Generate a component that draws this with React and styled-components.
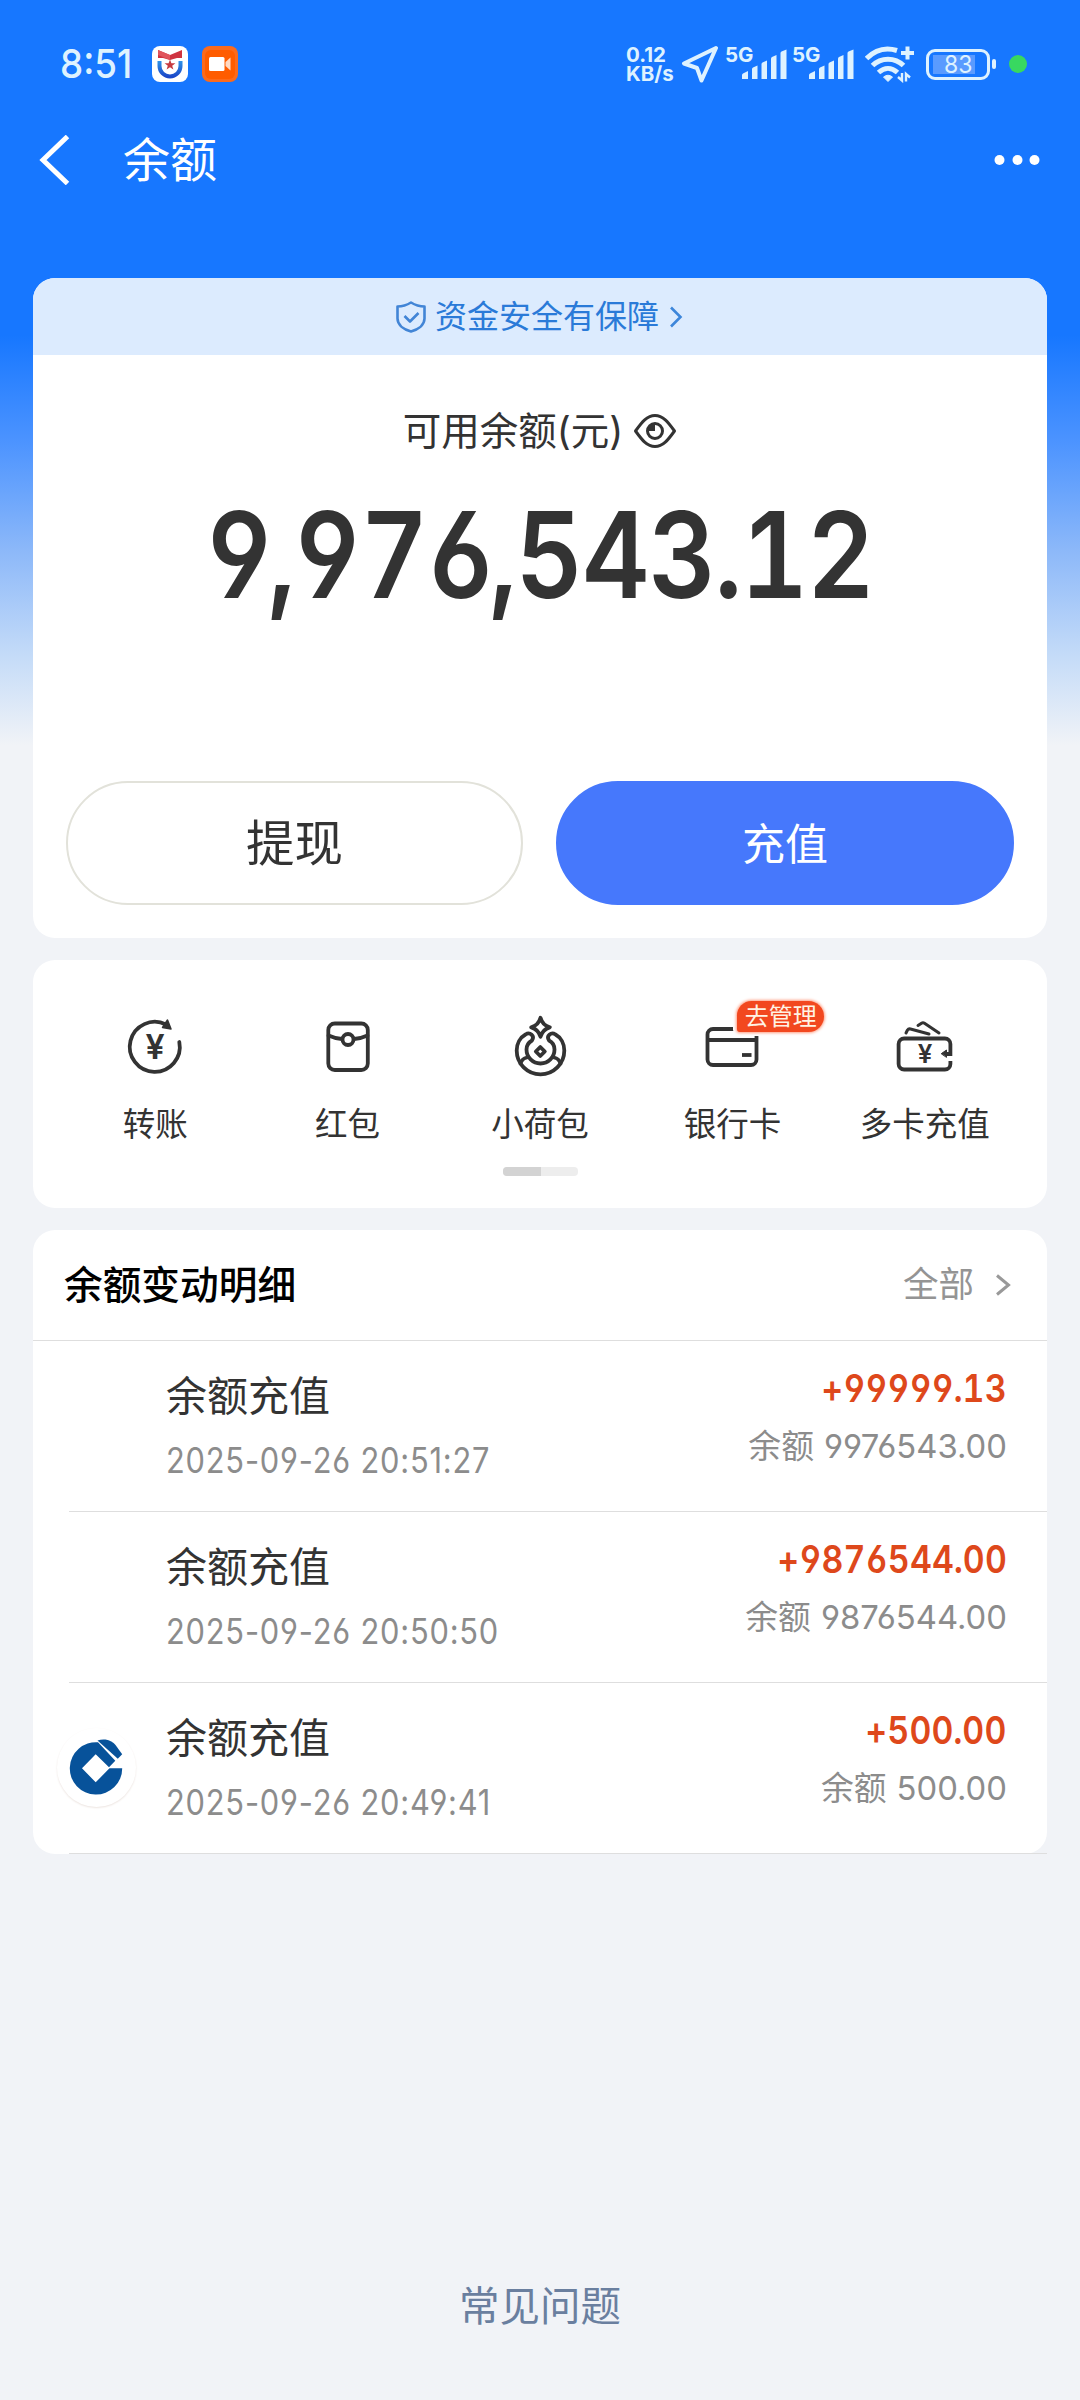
import React from "react";
import styled, { createGlobalStyle } from "styled-components";

const GlobalStyle = createGlobalStyle`
  body {
    margin: 0;
    background: #f1f3f7;
  }
  * {
    box-sizing: border-box;
  }
  svg {
    display: block;
    flex-shrink: 0;
  }
`;

const PageStyled = styled.div`
  width: 1080px;
  height: 2400px;
  overflow: hidden;
  display: flex;
  flex-direction: column;
  font-family: "Inter", "Noto Sans CJK SC", sans-serif;
  font-feature-settings: "cv03", "cv04";
  color: #333333;
  background: linear-gradient(
      180deg,
      #1777ff 0,
      #1777ff 335px,
      #4b93ff 440px,
      #8cb8f9 550px,
      #c4dbf8 655px,
      #f1f3f7 745px
    )
    #f1f3f7;
`;

/* digits are narrower than the base face */
const Digits = styled.span`
  display: inline-block;
  white-space: pre;
  letter-spacing: ${(p) => p.$spacing || 0}px;
  transform: scaleX(${(p) => p.$scale || 0.88});
  transform-origin: ${(p) => p.$origin || "left"} center;
`;
const TabularStyled = styled.span`
  font-feature-settings: "cv03", "cv04", "tnum";
`;
const PunctuationStyled = styled.span`
  margin-left: ${(p) => (p.$comma ? -0.067 : -0.034)}em;
  margin-right: -0.034em;
`;

/* ---------- status bar ---------- */

const StatusBarStyled = styled.div`
  height: 128px;
  padding: 0 53px 0 60px;
  display: flex;
  align-items: center;
  color: #def2ff;
`;
const ClockStyled = styled.div`
  width: 92px;
  font-size: 40px;
  line-height: 40px;
  font-weight: 500;
`;
const AppIconsStyled = styled.div`
  display: flex;
  gap: 14px;
  flex: 1;
`;
const SpeedStyled = styled.div`
  width: 55px;
  display: flex;
  flex-direction: column;
  font-size: 20.5px;
  line-height: 19px;
  font-weight: 700;
`;
const SignalStyled = styled.div`
  width: 61px;
  height: 34px;
  margin-left: ${(p) => p.$left}px;
  display: flex;
`;
const NetworkTypeStyled = styled.div`
  width: 17px;
  font-size: 20.5px;
  line-height: 16px;
  font-weight: 700;
  white-space: nowrap;
`;
const WifiStyled = styled.div`
  margin-left: 12px;
`;
const BatteryStyled = styled.div`
  width: 64px;
  height: 31px;
  margin-left: 11px;
  padding: 3px 4px;
  border: 3px solid #def2ff;
  border-radius: 9px;
`;
const BatteryLevelStyled = styled.div`
  width: 42px;
  height: 19px;
  padding-left: 11px;
  background: #5a9bff;
  font-size: 24px;
  line-height: 20px;
`;
const BatteryTipStyled = styled.div`
  width: 4px;
  height: 10px;
  margin-left: 2px;
  border-radius: 2px;
  background: #def2ff;
`;
const RecordDotStyled = styled.div`
  width: 18px;
  height: 18px;
  margin-left: 13px;
  border-radius: 50%;
  background: #38d860;
`;

/* ---------- nav bar ---------- */

const NavBarStyled = styled.div`
  height: 64px;
  padding: 0 40px 0 38px;
  display: flex;
  align-items: center;
`;
const NavTitleStyled = styled.div`
  flex: 1;
  margin-left: 53px;
  font-size: 47px;
  line-height: 64px;
  color: #ffffff;
`;

/* ---------- cards ---------- */

const MainStyled = styled.div`
  padding: 86px 33px 0;
  display: flex;
  flex-direction: column;
  gap: 22px;
`;
const CardStyled = styled.div`
  height: ${(p) => p.$height}px;
  border-radius: 22px;
  background: #ffffff;
  display: flex;
  flex-direction: column;
`;
const BannerStyled = styled.div`
  height: 77px;
  padding-right: 2px;
  border-radius: 22px 22px 0 0;
  background: #dcebfe;
  display: flex;
  justify-content: center;
  align-items: center;
  color: #2a7ad8;
  font-size: 32px;
  line-height: 40px;
`;
const BannerTextStyled = styled.span`
  margin: 0 10px 0 8px;
`;
const BalanceLabelStyled = styled.div`
  margin-top: 46px;
  height: 60px;
  display: flex;
  justify-content: center;
  align-items: center;
  gap: 10px;
  font-size: 38.5px;
  line-height: 60px;
`;
const BalanceStyled = styled.div`
  margin-top: 34px;
  height: 120px;
  display: flex;
  justify-content: center;
  font-size: 119px;
  line-height: 120px;
  font-weight: 600;
`;
const ButtonsStyled = styled.div`
  margin-top: auto;
  padding: 0 33px 33px;
  display: flex;
  gap: 33px;
`;
const ButtonStyled = styled.button`
  width: ${(p) => (p.$primary ? 458 : 457)}px;
  height: 124px;
  padding: 2px 0 0;
  border: 2px solid ${(p) => (p.$primary ? "#4678fc" : "#e2e2da")};
  border-radius: 62px;
  background: ${(p) => (p.$primary ? "#4678fc" : "#ffffff")};
  color: ${(p) => (p.$primary ? "#ffffff" : "#333333")};
  font-family: inherit;
  font-size: ${(p) => (p.$primary ? 43 : 48.5)}px;
  line-height: 60px;
`;

/* ---------- shortcuts ---------- */

const ShortcutsStyled = styled.div`
  padding: 55px 26px 0;
  display: grid;
  grid-template-columns: repeat(5, 1fr);
`;
const ShortcutStyled = styled.div`
  position: relative;
  display: flex;
  flex-direction: column;
  align-items: center;
  gap: 26px;
  font-size: 32.5px;
  line-height: 40px;
  white-space: nowrap;
`;
const BadgeStyled = styled.div`
  position: absolute;
  left: 101px;
  top: -14px;
  width: 87px;
  height: 31px;
  border-radius: 15px 16px 16px 3px;
  background: #f2481f;
  box-shadow: 0 0 3px 1px #ff9c80, 0 0 0 4px #ffffff;
  color: #fff3e4;
  font-size: 24px;
  line-height: 32px;
  text-align: center;
`;
const ScrollTrackStyled = styled.div`
  width: 75px;
  height: 9px;
  margin: 22px auto 0;
  border-radius: 4px;
  overflow: hidden;
  background: #ededed;
`;
const ScrollThumbStyled = styled.div`
  width: 38px;
  height: 9px;
  background: #d3d3d3;
`;

/* ---------- records ---------- */

const RecordsHeaderStyled = styled.div`
  height: 110px;
  padding: 0 36px 0 31px;
  display: flex;
  align-items: center;
`;
const RecordsTitleStyled = styled.div`
  flex: 1;
  color: #000000;
  font-size: 38.7px;
  line-height: 50px;
  font-weight: 500;
`;
const RecordsAllStyled = styled.div`
  display: flex;
  align-items: center;
  gap: 21px;
  color: #949494;
  font-size: 35.5px;
  line-height: 50px;
`;
const DividerStyled = styled.div`
  height: 1px;
  margin-left: ${(p) => p.$inset || 0}px;
  background: #dedede;
`;
const RecordStyled = styled.div`
  height: 170px;
  padding: 0 40px 0 24px;
  display: flex;
`;
const RecordLogoStyled = styled.div`
  width: 79px;
  height: 79px;
  margin: 45px 30px 0 0;
  padding-right: 2px;
  border-radius: 50%;
  display: flex;
  justify-content: center;
  align-items: center;
  box-shadow: ${(p) => (p.$visible ? "0 1px 2px #ece4e0" : "none")};
`;
const RecordLeftStyled = styled.div`
  flex: 1;
  padding-top: 30px;
  display: flex;
  flex-direction: column;
  gap: 19px;
`;
const RecordNameStyled = styled.div`
  font-size: 41px;
  line-height: 50px;
`;
const RecordTimeStyled = styled.div`
  color: #8c8c8c;
  font-size: 35px;
  line-height: 40px;
`;
const RecordRightStyled = styled.div`
  padding-top: 27px;
  display: flex;
  flex-direction: column;
  align-items: flex-end;
  gap: 18px;
`;
const RecordAmountStyled = styled.div`
  color: #de481b;
  font-size: 38.5px;
  line-height: 40px;
  font-weight: 600;
`;
const RecordBalanceStyled = styled.div`
  display: flex;
  gap: 10px;
  color: #8c8c8c;
  font-size: 32.8px;
  line-height: 40px;
`;

const FooterStyled = styled.div`
  margin-top: 428px;
  text-align: center;
  color: #6a7f9f;
  font-size: 40.5px;
  line-height: 50px;
`;

/* ---------- icons ---------- */

const ShieldAppIcon = () => (
  <svg width="36" height="36" viewBox="0 0 36 36">
    <defs>
      <linearGradient id="cup" x1="0" y1="0" x2="0" y2="1">
        <stop offset="0" stopColor="#2f93e8" />
        <stop offset="1" stopColor="#1b48c8" />
      </linearGradient>
    </defs>
    <rect width="36" height="36" rx="8" fill="#fff" />
    <path d="M6 4l12 5 12-5v8h-5l-7 2-7-2H6z" fill="#cf3340" />
    <path d="M6 4l12 5v5l-12-5z" fill="#e0555c" />
    <path d="M7.500 15v5a10.500 10.500 0 0 0 21 0v-5" fill="none" stroke="url(#cup)" strokeWidth="4" />
    <path d="M18 13.500l1.400 3.800h4l-3.200 2.400 1.200 3.900-3.400-2.300-3.400 2.300 1.200-3.900-3.200-2.400h4z" fill="#c63a3f" />
  </svg>
);

const CameraAppIcon = () => (
  <svg width="36" height="36" viewBox="0 0 36 36">
    <rect width="36" height="36" rx="8" fill="#fb6a1c" />
    <rect x="3" y="4" width="30" height="29" rx="6" fill="#ff5c00" />
    <rect x="7" y="11" width="15.500" height="14" rx="1.500" fill="#fff" />
    <path d="M23.500 16l5-4.500v13l-5-4.500z" fill="#ffd9c2" />
  </svg>
);

const LocationIcon = () => (
  <svg width="38" height="38" viewBox="0 0 38 38">
    <path
      d="M35 3L3 18.500l13 4.500 4.500 12.500z"
      fill="none"
      stroke="#def2ff"
      strokeWidth="4"
      strokeLinejoin="round"
    />
  </svg>
);

const BarsIcon = () => (
  <svg width="45" height="34" viewBox="0 0 45 34">
    <g fill="#def2ff">
      <path d="M0 28q0-1 1-1.500l5-2.500v8H0z" />
      <path d="M10 22q0-1 1-1.500l4.500-2V32H10z" />
      <path d="M19.500 17q0-1 1-1.500l4.500-2V32h-5.500z" />
      <path d="M29 11.500q0-1 1-1.500l4.500-2v24H29z" />
      <path d="M38.500 6q0-1 1-1.500l5-2V32h-6z" />
    </g>
  </svg>
);

const WifiIcon = () => (
  <svg width="50" height="38" viewBox="0 0 50 38">
    <g fill="none" stroke="#def2ff" strokeWidth="5">
      <path d="M1.500 13.500C10 5 21 2 32 5.500" />
      <path d="M7.500 20.500C16 12 30 12 38.500 20.500" />
      <path d="M13.500 27.500c6-5.500 13-5.500 19 0" />
      <path d="M42.500 1.500v13M36 8h13" strokeWidth="4" />
    </g>
    <path d="M18.500 32q4.500-3.500 9 0L23 36.500z" fill="#def2ff" stroke="#def2ff" strokeLinejoin="round" />
    <path d="M37 28v7.500l-4-3.500M41 36.500V29l4 3.500" fill="none" stroke="#def2ff" strokeWidth="2.400" />
  </svg>
);

const BackIcon = () => (
  <svg width="32" height="50" viewBox="0 0 32 50">
    <path d="M29.500 1.500L5 25l24.500 23.500" fill="none" stroke="#fff" strokeWidth="5" />
  </svg>
);

const MoreIcon = () => (
  <svg width="46" height="12" viewBox="0 0 46 12">
    <g fill="#fff">
      <circle cx="5.500" cy="6" r="5" />
      <circle cx="23.500" cy="6" r="5" />
      <circle cx="40.500" cy="6" r="5" />
    </g>
  </svg>
);

const ShieldIcon = () => (
  <svg width="32" height="34" viewBox="0 0 32 34">
    <g fill="none" stroke="#4285d6" strokeWidth="2.600" strokeLinejoin="round">
      <path d="M16 2.500C12 5 7.500 6.500 2.500 6.500v12C2.500 25 9 29.500 16 31.500c7-2 13.500-6.500 13.500-13v-12C24.500 6.500 20 5 16 2.500z" />
      <path d="M9.500 16l5.500 5.500 8.500-8.500" />
    </g>
  </svg>
);

const ChevronIcon = ({ width, height, stroke, strokeWidth }) => (
  <svg width={width} height={height} viewBox={`0 0 ${width} ${height}`}>
    <path
      d={`M2 1.500L${width - 2.5} ${height / 2}L2 ${height - 1.5}`}
      fill="none"
      stroke={stroke}
      strokeWidth={strokeWidth}
    />
  </svg>
);

const EyeIcon = () => (
  <svg width="44" height="36" viewBox="0 0 44 36">
    <path
      d="M2.500 18C9 9 14 2.500 22 2.500S35 9 41.500 18C35 27 30 33.500 22 33.500S9 27 2.500 18z"
      fill="none"
      stroke="#333"
      strokeWidth="3"
      strokeLinejoin="round"
    />
    <circle cx="22" cy="18" r="7.500" fill="none" stroke="#333" strokeWidth="3" />
    <path d="M22 11v7h-7a7 7 0 0 1 7-7z" fill="#333" />
  </svg>
);

const ShortcutSvg = ({ children }) => (
  <svg
    width="64"
    height="64"
    viewBox="0 0 64 64"
    fill="none"
    stroke="#333"
    strokeWidth="3.800"
    strokeLinejoin="round"
    strokeLinecap="round"
  >
    {children}
  </svg>
);

const Yuan = ({ x, y, size }) => (
  <text
    x={x}
    y={y}
    fill="#333"
    stroke="none"
    fontFamily="Inter"
    fontWeight="600"
    fontSize={size}
    textAnchor="middle"
  >
    ¥
  </text>
);

const TransferIcon = () => (
  <ShortcutSvg>
    <path d="M56.300 27A25 25 0 1 1 43 9.500" />
    <path d="M44.500 5l3.500 9-8.500-1.500z" fill="#333" strokeWidth="1.500" />
    <Yuan x="32" y="44" size="34" />
  </ShortcutSvg>
);

const PacketIcon = () => (
  <ShortcutSvg>
    <rect x="12.300" y="8.500" width="39.500" height="46.500" rx="6.500" />
    <path d="M12.500 20.500q6.500 3 13.500 3.500M51.500 20.500q-6.500 3-13.500 3.500" />
    <circle cx="32" cy="24.500" r="5.500" />
  </ShortcutSvg>
);

const PurseIcon = () => (
  <ShortcutSvg>
    <path d="M32.500 2.800q2 7.500 9.300 9.500-7.300 2-9.300 9.500-2-7.500-9.300-9.500 7.300-2 9.300-9.500z" />
    <path d="M24 25.500C27 21 22 16.500 17.500 19.500 12 22.500 8.700 29 8.700 35.500a23.800 23.800 0 0 0 47.600 0C56.300 29 53 22.500 47.500 19.500 43 16.500 38 21 41 25.500c4 2 5.500 5.500 5.500 9a14 14 0 0 1-28 0c0-3.500 2-7 5.500-9z" />
    <path d="M19 42.500q-5 1-6.500 6M46 42.500q5 1 6.500 6" />
    <path d="M32.300 32l4.500 4.500-4.500 4.500-4.500-4.500z" />
  </ShortcutSvg>
);

const BankCardIcon = () => (
  <ShortcutSvg>
    <rect x="7.500" y="14" width="49" height="36" rx="5.500" />
    <path d="M7.500 25h49" strokeLinecap="butt" />
    <path d="M42 40h9.500" strokeLinecap="butt" />
  </ShortcutSvg>
);

const MultiCardIcon = () => (
  <ShortcutSvg>
    <path
      d="M54 39h3.400V29a5.500 5.500 0 0 0-5.500-5.500H11.100A5.500 5.500 0 0 0 5.600 29v20a5.500 5.500 0 0 0 5.500 5.500h40.800a5.500 5.500 0 0 0 5.500-5.500v-3"
      strokeLinecap="butt"
      strokeLinejoin="miter"
    />
    <path d="M48.500 38.500l5-3.500v7z" fill="#333" strokeWidth="1" />
    <path d="M13 18l1.500-3q1-1.500 3-1L36 19" strokeWidth="3" />
    <path d="M25 10.500l3.500-2.300q1.500-1 3 0L46 18" strokeWidth="3" />
    <Yuan x="32" y="48" size="26" />
  </ShortcutSvg>
);

const BankLogo = () => (
  <svg width="64" height="64" viewBox="0 0 64 64">
    <g fill="#07529a">
      <path d="M34 6.300A26.200 26.200 0 1 0 58.200 32.300H45.500L31.700 46.300 18 32.300 31.700 18.300 45 31.200l6.300-6.500z" />
      <path d="M33.500 4.500q4-1.500 8-1Q48 4.500 51.500 9l6.700 9.300-4.400 4.400z" />
    </g>
  </svg>
);

/* ---------- page ---------- */

const shortcuts = [
  { name: "转账", Icon: TransferIcon },
  { name: "红包", Icon: PacketIcon },
  { name: "小荷包", Icon: PurseIcon },
  { name: "银行卡", Icon: BankCardIcon, badge: "去管理" },
  { name: "多卡充值", Icon: MultiCardIcon },
];

const records = [
  { time: "2025-09-26 20:51:27", amount: "+99999.13", balance: "9976543.00" },
  { time: "2025-09-26 20:50:50", amount: "+9876544.00", balance: "9876544.00" },
  { time: "2025-09-26 20:49:41", amount: "+500.00", balance: "500.00", logo: true },
];

/* equal width digits, punctuation stays tight */
const Money = ({ value, origin, spacing }) => (
  <Digits $origin={origin} $spacing={spacing}>
    {value.split(/([,.])/).map((part, i) =>
      i % 2 ? (
        <PunctuationStyled key={i} $comma={part === ","}>
          {part}
        </PunctuationStyled>
      ) : (
        <TabularStyled key={i}>{part}</TabularStyled>
      )
    )}
  </Digits>
);

const Signal = ({ left }) => (
  <SignalStyled $left={left}>
    <NetworkTypeStyled>5G</NetworkTypeStyled>
    <BarsIcon />
  </SignalStyled>
);

const StatusBar = () => (
  <StatusBarStyled>
    <ClockStyled>
      <Digits $scale={0.92}>8:51</Digits>
    </ClockStyled>
    <AppIconsStyled>
      <ShieldAppIcon />
      <CameraAppIcon />
    </AppIconsStyled>
    <SpeedStyled>
      <span>0.12</span>
      <span>KB/s</span>
    </SpeedStyled>
    <LocationIcon />
    <Signal left={6} />
    <Signal left={6} />
    <WifiStyled>
      <WifiIcon />
    </WifiStyled>
    <BatteryStyled>
      <BatteryLevelStyled>
        <Digits $scale={0.96}>83</Digits>
      </BatteryLevelStyled>
    </BatteryStyled>
    <BatteryTipStyled />
    <RecordDotStyled />
  </StatusBarStyled>
);

const Record = ({ time, amount, balance, logo }) => (
  <>
    <RecordStyled>
      <RecordLogoStyled $visible={logo}>{logo && <BankLogo />}</RecordLogoStyled>
      <RecordLeftStyled>
        <RecordNameStyled>余额充值</RecordNameStyled>
        <RecordTimeStyled>
          <Digits $spacing={0.9}>{time}</Digits>
        </RecordTimeStyled>
      </RecordLeftStyled>
      <RecordRightStyled>
        <RecordAmountStyled>
          <Money origin="right" spacing={0.2} value={amount} />
        </RecordAmountStyled>
        <RecordBalanceStyled>
          <span>余额</span>
          <span>{balance}</span>
        </RecordBalanceStyled>
      </RecordRightStyled>
    </RecordStyled>
    <DividerStyled $inset={36} />
  </>
);

const App = () => {
  return (
    <PageStyled>
      <GlobalStyle />
      <StatusBar />
      <NavBarStyled>
        <BackIcon />
        <NavTitleStyled>余额</NavTitleStyled>
        <MoreIcon />
      </NavBarStyled>
      <MainStyled>
        <CardStyled $height={660}>
          <BannerStyled>
            <ShieldIcon />
            <BannerTextStyled>资金安全有保障</BannerTextStyled>
            <ChevronIcon width={14} height={22} stroke="#3d86da" strokeWidth={2.6} />
          </BannerStyled>
          <BalanceLabelStyled>
            可用余额(元)
            <EyeIcon />
          </BalanceLabelStyled>
          <BalanceStyled>
            <Money origin="center" spacing={-1.3} value="9,976,543.12" />
          </BalanceStyled>
          <ButtonsStyled>
            <ButtonStyled>提现</ButtonStyled>
            <ButtonStyled $primary>充值</ButtonStyled>
          </ButtonsStyled>
        </CardStyled>
        <CardStyled $height={248}>
          <ShortcutsStyled>
            {shortcuts.map(({ name, Icon, badge }) => (
              <ShortcutStyled key={name}>
                <Icon />
                {name}
                {badge && <BadgeStyled>{badge}</BadgeStyled>}
              </ShortcutStyled>
            ))}
          </ShortcutsStyled>
          <ScrollTrackStyled>
            <ScrollThumbStyled />
          </ScrollTrackStyled>
        </CardStyled>
        <CardStyled $height={624}>
          <RecordsHeaderStyled>
            <RecordsTitleStyled>余额变动明细</RecordsTitleStyled>
            <RecordsAllStyled>
              全部
              <ChevronIcon width={16} height={22} stroke="#999" strokeWidth={3} />
            </RecordsAllStyled>
          </RecordsHeaderStyled>
          <DividerStyled />
          {records.map((record) => (
            <Record key={record.time} {...record} />
          ))}
        </CardStyled>
      </MainStyled>
      <FooterStyled>常见问题</FooterStyled>
    </PageStyled>
  );
};

export default App;
